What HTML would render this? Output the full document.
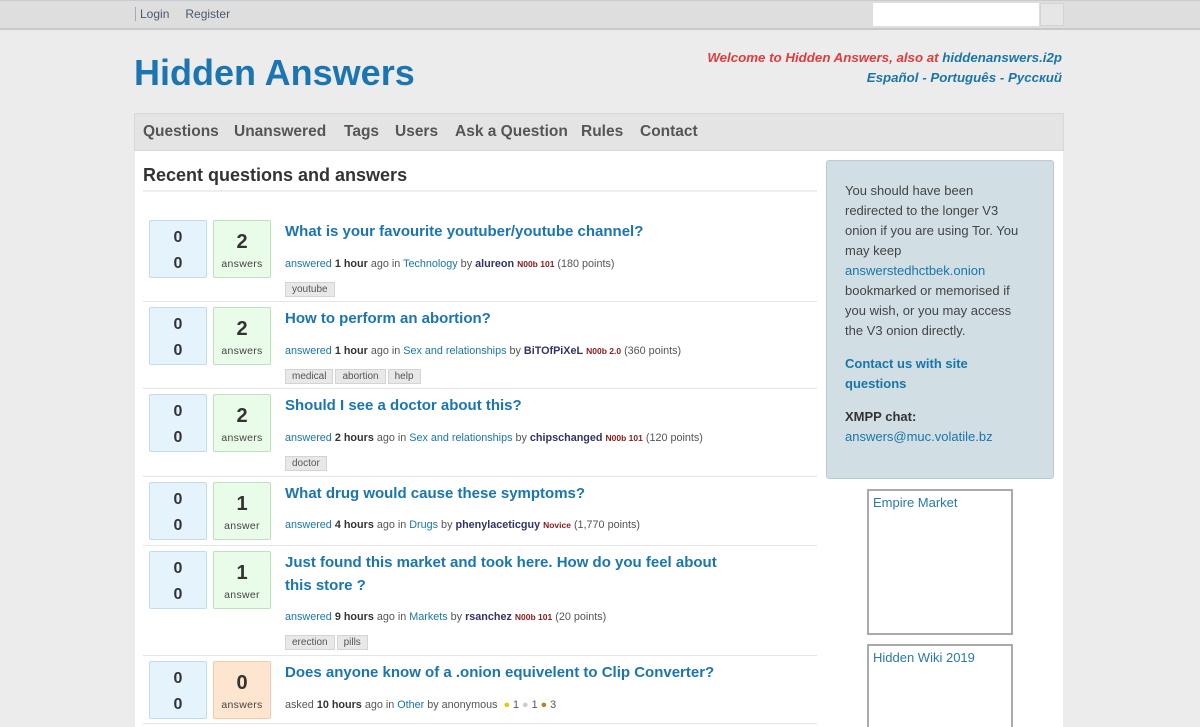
<!DOCTYPE html>
<html><head><meta charset="utf-8"><style>
*{margin:0;padding:0;box-sizing:border-box}
html,body{width:1200px;height:727px;overflow:hidden}
body{background:#ececec;font-family:"Liberation Sans",Arial,sans-serif;position:relative}
a{color:#1a75a8;text-decoration:none}
.top{position:absolute;left:0;top:0;width:1200px;height:30px;background:#dedede;border-top:1px solid #c6ccd2;border-bottom:2px solid #c9c9c9}
.top .l{position:absolute;left:135px;top:6px;font-size:12px;color:#557;border-left:1px solid #aaa;padding-left:4px}
.top .l span{margin-right:16px;color:#4a5a6a}
.srch{position:absolute;left:873px;top:3px;width:166px;height:23px;background:#fff}
.sbtn{position:absolute;left:1040px;top:3px;width:24px;height:23px;background:#e6e6e6;border:1px solid #d4d4d4}
.logo{position:absolute;left:134px;top:52px;font-size:36px;font-weight:bold;color:#1a75b0}
.wel{position:absolute;right:138px;top:48px;font-size:13.3px;font-weight:bold;font-style:italic;text-align:right;line-height:20px;color:#e03c3c}
.wel a{color:#1a75a8}
.nav{position:absolute;left:134px;top:113px;width:930px;height:38px;background:#e4e4e4;border:1px solid #d8d8d8}
.nav span{position:absolute;top:9px;font-size:15.5px;font-weight:bold;color:#555}
.main{position:absolute;left:135px;top:151px;width:928px;height:576px;background:#fff}
h1{position:absolute;left:143px;top:165px;font-size:18px;font-weight:bold;color:#333}
.hr{position:absolute;left:143px;top:190px;width:674px;height:2px;background:#eee}
.row{position:absolute;left:143px;width:674px;border-bottom:1px solid #e6e6e6}
.v{position:absolute;left:6px;width:58px;height:58px;background:#e5f3fc;border:1px solid #c3dcea;border-radius:2px;font-size:16px;font-weight:bold;color:#333;text-align:center;line-height:26px;padding-top:4px}
.a{position:absolute;left:70px;width:58px;height:58px;background:#e9fbe9;border:1px solid #bfe0bf;border-radius:2px;text-align:center;color:#333}
.a.z{background:#fde5cf;border-color:#f2ccaa}
.a b{display:block;font-size:20px;margin-top:10px;line-height:22px}
.a i{font-style:normal;font-size:10.5px;display:block;margin-top:5px;color:#444;letter-spacing:.3px}
.t{position:absolute;left:142px;font-size:15px;font-weight:bold;color:#1a75b0;line-height:23px;width:450px}
.m{position:absolute;left:142px;font-size:10.8px;color:#555;white-space:nowrap}
.m .b{color:#1a75a8}.m b{color:#333}.m .r{color:#8b1a1a;font-size:8.5px;font-weight:bold}.m .u{color:#336;font-weight:bold}
.tg{position:absolute;left:142px;font-size:10px;color:#555}
.tg span{display:inline-block;background:#e8e8e8;border:1px solid #d4d4d4;padding:1px 6px;margin-right:2px}
.side{position:absolute;left:826px;top:160px;width:228px;height:319px;background:#d1dfe5;border:1px solid #b9cad2;border-radius:3px;padding:20px 30px 20px 18px;font-size:13px;line-height:20px;color:#444}
.ad{position:absolute;left:867px;width:146px;background:#fff;border:2px solid #aaa;font-size:13px;color:#2a7aa8;padding:4px 4px}
</style></head><body>
<div class="top"><div class="l"><span>Login</span><span>Register</span></div></div>
<div class="srch"></div><div class="sbtn"></div>
<div class="logo">Hidden Answers</div>
<div class="wel">Welcome to Hidden Answers, also at <a>hiddenanswers.i2p</a><br><a>Español</a> <span style="color:#1a75a8">-</span> <a>Português</a> <span style="color:#1a75a8">-</span> <a>Русский</a></div>
<div class="nav"><span style="left:8px">Questions</span><span style="left:99px">Unanswered</span><span style="left:209px">Tags</span><span style="left:260px">Users</span><span style="left:320px">Ask a Question</span><span style="left:446px">Rules</span><span style="left:505px">Contact</span></div>
<div class="main"></div>
<h1>Recent questions and answers</h1><div class="hr"></div>

<div class="row" style="top:214px;height:88px"><div class="v" style="top:6px">0<br>0</div><div class="a" style="top:6px"><b>2</b><i>answers</i></div>
<div class="t" style="top:6px">What is your favourite youtuber/youtube channel?</div>
<div class="m" style="top:44px"><span class="b">answered</span> <b>1 hour</b> ago in <span class="b">Technology</span> by <span class="u">alureon</span> <span class="r">N00b 101</span> (180 points)</div>
<div class="tg" style="top:68px"><span>youtube</span></div></div>

<div class="row" style="top:302px;height:87px"><div class="v" style="top:5px">0<br>0</div><div class="a" style="top:5px"><b>2</b><i>answers</i></div>
<div class="t" style="top:5px">How to perform an abortion?</div>
<div class="m" style="top:43px"><span class="b">answered</span> <b>1 hour</b> ago in <span class="b">Sex and relationships</span> by <span class="u">BiTOfPiXeL</span> <span class="r">N00b 2.0</span> (360 points)</div>
<div class="tg" style="top:67px"><span>medical</span><span>abortion</span><span>help</span></div></div>

<div class="row" style="top:389px;height:88px"><div class="v" style="top:5px">0<br>0</div><div class="a" style="top:5px"><b>2</b><i>answers</i></div>
<div class="t" style="top:5px">Should I see a doctor about this?</div>
<div class="m" style="top:43px"><span class="b">answered</span> <b>2 hours</b> ago in <span class="b">Sex and relationships</span> by <span class="u">chipschanged</span> <span class="r">N00b 101</span> (120 points)</div>
<div class="tg" style="top:67px"><span>doctor</span></div></div>

<div class="row" style="top:477px;height:69px"><div class="v" style="top:5px">0<br>0</div><div class="a" style="top:5px"><b>1</b><i>answer</i></div>
<div class="t" style="top:5px">What drug would cause these symptoms?</div>
<div class="m" style="top:42px"><span class="b">answered</span> <b>4 hours</b> ago in <span class="b">Drugs</span> by <span class="u">phenylaceticguy</span> <span class="r">Novice</span> (1,770 points)</div></div>

<div class="row" style="top:546px;height:110px"><div class="v" style="top:5px">0<br>0</div><div class="a" style="top:5px"><b>1</b><i>answer</i></div>
<div class="t" style="top:5px">Just found this market and took here. How do you feel about this store ?</div>
<div class="m" style="top:65px"><span class="b">answered</span> <b>9 hours</b> ago in <span class="b">Markets</span> by <span class="u">rsanchez</span> <span class="r">N00b 101</span> (20 points)</div>
<div class="tg" style="top:89px"><span>erection</span><span>pills</span></div></div>

<div class="row" style="top:656px;height:68px"><div class="v" style="top:5px">0<br>0</div><div class="a z" style="top:5px"><b>0</b><i>answers</i></div>
<div class="t" style="top:5px;width:520px">Does anyone know of a .onion equivelent to Clip Converter?</div>
<div class="m" style="top:43px">asked <b>10 hours</b> ago in <span class="b">Other</span> by anonymous &nbsp;<span style="color:#e8c800">●</span> 1 <span style="color:#ccc">●</span> 1 <span style="color:#c08020">●</span> 3</div></div>

<div class="side">You should have been redirected to the longer V3 onion if you are using Tor. You may keep <a>answerstedhctbek.onion</a> bookmarked or memorised if you wish, or you may access the V3 onion directly.<br><div style="height:13px"></div><a style="font-weight:bold">Contact us with site questions</a><div style="height:13px"></div><b style="color:#333">XMPP chat:</b><br><a>answers@muc.volatile.bz</a></div>
<div class="ad" style="top:489px;height:146px">Empire Market</div>
<div class="ad" style="top:644px;height:90px">Hidden Wiki 2019</div>
</body></html>
